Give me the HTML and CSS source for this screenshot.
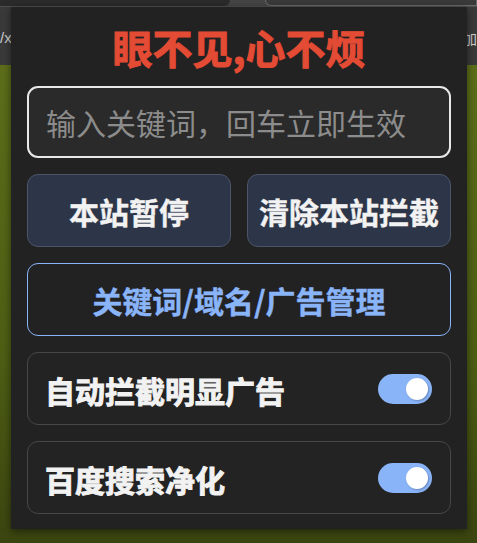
FILE: index.html
```html
<!DOCTYPE html>
<html lang="zh-CN">
<head>
<meta charset="utf-8">
<title>眼不见,心不烦</title>
<link rel="stylesheet" href="styles.css">
</head>
<body>
<div class="browser">
  <div class="topbar">
    <div class="tab-left"></div>
    <div class="omni"></div>
  </div>
  <div class="toolbar">
    <span class="tb-left">/x</span>
    <span class="tb-right">加</span>
  </div>
  <div class="page"></div>
</div>

<div class="popup">
  <h1 class="title">眼不见,心不烦</h1>
  <input class="keyword" type="text" placeholder="输入关键词，回车立即生效">
  <div class="btn-row">
    <button class="btn btn-dark">本站暂停</button>
    <button class="btn btn-dark">清除本站拦截</button>
  </div>
  <button class="btn btn-outline">关键词/域名/广告管理</button>
  <div class="opt">
    <span class="opt-label">自动拦截明显广告</span>
    <span class="switch"><span class="knob"></span></span>
  </div>
  <div class="opt">
    <span class="opt-label">百度搜索净化</span>
    <span class="switch"><span class="knob"></span></span>
  </div>
</div>
</body>
</html>
```
FILE: styles.css
```css
html, body {
  margin: 0;
  padding: 0;
  width: 477px;
  height: 543px;
  overflow: hidden;
}
body {
  font-family: "Noto Sans CJK SC", "Noto Sans", sans-serif;
  background: #2a2a2a;
  position: relative;
}
.browser {
  display: flex;
  flex-direction: column;
  height: 543px;
}
.topbar {
  height: 6px;
  background: #454545;
  display: flex;
  border-bottom: 1px solid #505050;
}
.tab-left {
  width: 230px;
  background: #2b2b2b;
  border-bottom-right-radius: 8px;
}
.omni {
  margin-left: 35px;
  flex: 1;
  background: #3a3a3a;
  border: 1px solid #6a6a6a;
  border-top: none;
  border-bottom-left-radius: 10px;
}
.toolbar {
  height: 58px;
  background: #3a3a3a;
  display: flex;
  justify-content: space-between;
  align-items: center;
  color: #cfcfcf;
  font-family: "Liberation Sans", sans-serif;
  font-size: 15px;
}
.tb-left { margin-left: 0; padding-top: 3px; }
.tb-right { margin-right: 0; padding-top: 3px; font-family: "Noto Sans CJK SC", sans-serif; font-size: 14px; }
.page {
  flex: 1;
  background: linear-gradient(180deg, #5c6e1a 0%, #4e5f14 60%, #3b4510 100%);
}

.popup {
  position: absolute;
  left: 11px;
  top: 7px;
  width: 456px;
  height: 522px;
  box-sizing: border-box;
  background: #222222;
  padding: 17px 16px 15px;
  display: flex;
  flex-direction: column;
  gap: 16px;
  box-shadow: 0 2px 8px rgba(0,0,0,0.5);
}
.title {
  margin: 0;
  height: 46px;
  line-height: 46px;
  text-align: center;
  font-size: 40px;
  font-weight: 700;
  color: #e44b34;
  -webkit-text-stroke: 1px #e44b34;
}
.keyword {
  height: 72px;
  box-sizing: border-box;
  border: 2px solid #e8e8e8;
  border-radius: 11px;
  background: #2a2a2a;
  padding: 0 17px;
  font-family: inherit;
  font-size: 30px;
  color: #ddd;
  outline: none;
}
.keyword::placeholder { color: #8c8c8c; }
.btn-row {
  display: grid;
  grid-template-columns: 1fr 1fr;
  gap: 16px;
}
.btn {
  height: 73px;
  box-sizing: border-box;
  border-radius: 11px;
  font-family: inherit;
  font-size: 30px;
  font-weight: 700;
  padding: 0;
  white-space: nowrap;
  -webkit-text-stroke: 0.4px currentColor;
}
.btn-dark {
  background: #2d3648;
  border: 1px solid #4c5569;
  color: #f2f2f2;
}
.btn-outline {
  background: #222222;
  border: 1px solid #8ab4f8;
  color: #8ab4f8;
}
.opt {
  height: 73px;
  box-sizing: border-box;
  border: 1px solid #474747;
  border-radius: 11px;
  background: #232323;
  display: flex;
  align-items: center;
  justify-content: space-between;
  padding: 3px 18px 0 17px;
}
.opt-label {
  font-size: 30px;
  font-weight: 700;
  color: #f2f2f2;
  -webkit-text-stroke: 1px #f2f2f2;
}
.switch {
  width: 54px;
  height: 30px;
  margin-top: -3px;
  border-radius: 15px;
  background: #8ab4f8;
  display: flex;
  align-items: center;
  justify-content: flex-end;
  padding-right: 4px;
  box-sizing: border-box;
}
.knob {
  width: 22px;
  height: 22px;
  border-radius: 50%;
  background: #ffffff;
  box-shadow: 1px 1px 2px rgba(0,0,0,0.25);
}
```
